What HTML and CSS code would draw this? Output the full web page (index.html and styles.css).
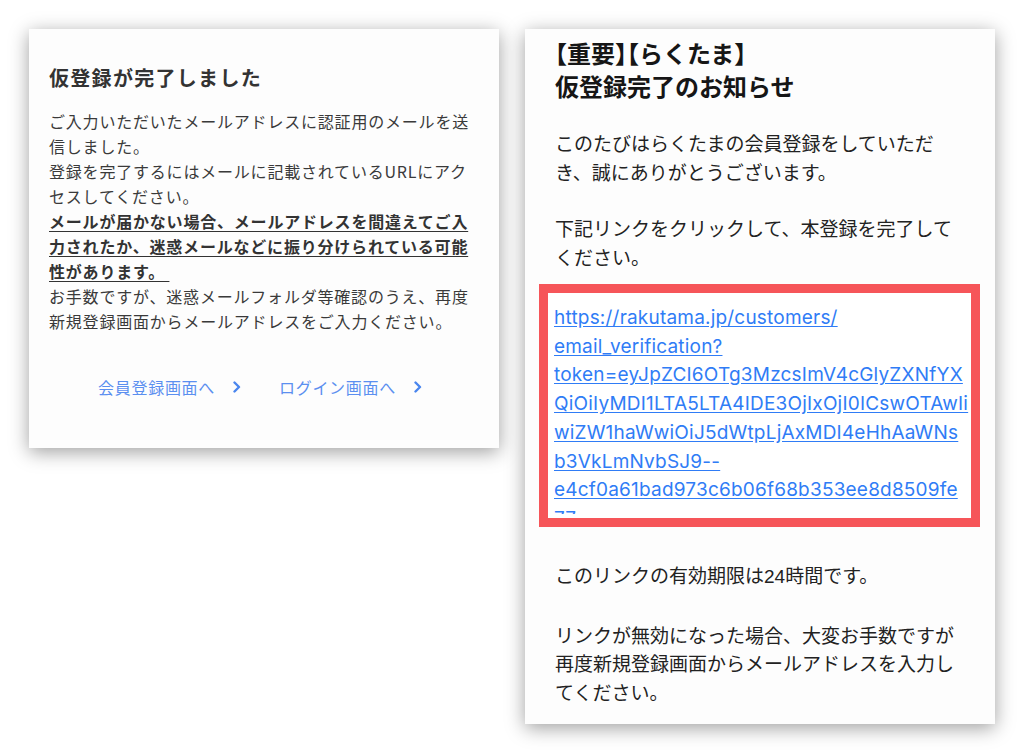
FILE: index.html
```html
<!DOCTYPE html>
<html lang="ja">
<head>
  <meta charset="UTF-8">
  <title>仮登録完了</title>
  <link rel="stylesheet" href="styles.css">
</head>
<body>
  <div class="board">
    <!-- 画面側 -->
    <div class="card card-screen">
      <h1 class="screen-title">仮登録が完了しました</h1>
      <p class="screen-text">
        ご入力いただいたメールアドレスに認証用のメールを送信しました。<br>
        登録を完了するにはメールに記載されているURLにアクセスしてください。<br>
        <span class="notice">メールが届かない場合、メールアドレスを間違えてご入力されたか、迷惑メールなどに振り分けられている可能性があります。&nbsp;</span><br>
        お手数ですが、迷惑メールフォルダ等確認のうえ、再度新規登録画面からメールアドレスをご入力ください。
      </p>
      <div class="screen-links">
        <a class="screen-link" href="#">会員登録画面へ
          <svg class="chevron" viewBox="0 0 8 12" width="8" height="12"><polyline points="1.5,1.5 6,6 1.5,10.5"/></svg>
        </a>
        <a class="screen-link" href="#">ログイン画面へ
          <svg class="chevron" viewBox="0 0 8 12" width="8" height="12"><polyline points="1.5,1.5 6,6 1.5,10.5"/></svg>
        </a>
      </div>
    </div>

    <!-- メール側 -->
    <div class="card card-mail">
      <h2 class="mail-title">【重要】【らくたま】<br>仮登録完了のお知らせ</h2>
      <p class="mail-text">このたびはらくたまの会員登録をしていただき、誠にありがとうございます。</p>
      <p class="mail-text">下記リンクをクリックして、本登録を完了してください。</p>
      <div class="link-box">
        <div class="link-clip">
          <a class="mail-link" href="#">https://rakutama.jp/customers/<br>email_verification?<br>token=eyJpZCI6OTg3MzcsImV4cGlyZXNfYX<br>QiOiIyMDI1LTA5LTA4IDE3OjIxOjI0ICswOTAwIi<br>wiZW1haWwiOiJ5dWtpLjAxMDI4eHhAaWNs<br>b3VkLmNvbSJ9--<br>e4cf0a61bad973c6b06f68b353ee8d8509fe<br>77</a>
        </div>
      </div>
      <p class="mail-text mail-after">このリンクの有効期限は24時間です。</p>
      <p class="mail-text">リンクが無効になった場合、大変お手数ですが再度新規登録画面からメールアドレスを入力してください。</p>
    </div>
  </div>
</body>
</html>
```

FILE: styles.css
```css
body {
  margin: 0;
  background: #ffffff;
  font-family: "Noto Sans CJK JP", sans-serif;
}
.board {
  display: flex;
  align-items: flex-start;
  gap: 26px;
  padding: 29px;
}
.card {
  width: 470px;
  box-sizing: border-box;
  background: #fdfdfd;
  box-shadow: 0 4px 18px rgba(0, 0, 0, 0.38);
  flex-shrink: 0;
}

/* 画面側 */
.card-screen {
  padding: 34px 0 49px 20px;
  color: #3a3a3a;
}
.screen-title {
  margin: 0 0 16px;
  font-size: 20px;
  line-height: 30px;
  letter-spacing: 1.3px;
  font-weight: 700;
  color: #333333;
}
.screen-text {
  width: 428px;
  margin: 0;
  font-size: 16px;
  line-height: 25px;
  letter-spacing: 0.8px;
}
.notice {
  font-weight: 700;
  color: #333333;
  text-decoration: underline;
  text-underline-offset: 3px;
}
.screen-links {
  display: flex;
  justify-content: center;
  gap: 38px;
  margin: 41px 28px 0 0;
}
.screen-link {
  display: flex;
  align-items: center;
  gap: 18px;
  color: #5b8ff0;
  text-decoration: none;
  font-size: 16px;
  line-height: 24px;
  letter-spacing: 0.7px;
}
.chevron {
  fill: none;
  stroke: #4a86ee;
  stroke-width: 2.4;
  stroke-linecap: round;
  stroke-linejoin: round;
}

/* メール側 */
.card-mail {
  padding: 7px 0 16px 30px;
  color: #222222;
  font-family: "Liberation Sans", "Noto Sans CJK JP", sans-serif;
}
.mail-title {
  margin: 0 0 29px;
  font-family: "Noto Sans CJK JP", sans-serif;
  font-size: 24px;
  line-height: 33px;
  font-weight: 700;
  color: #161616;
  font-feature-settings: "halt";
}
.mail-text {
  width: 405px;
  margin: 0 0 28px;
  font-size: 19px;
  line-height: 28.5px;
}
.mail-text:last-child {
  margin-bottom: 0;
}
.link-box {
  width: 441px;
  box-sizing: border-box;
  margin: -17px 0 0 -16px;
  border: 9px solid #f65559;
  background: #ffffff;
  padding: 11px 0 4px 6px;
}
.link-clip {
  height: 210px;
  overflow: hidden;
}
.mail-link {
  color: #2f7cf6;
  font-family: Inter, "Liberation Sans", sans-serif;
  font-size: 19px;
  line-height: 28.7px;
  letter-spacing: 0.2px;
  text-decoration: underline;
  text-underline-offset: 2px;
}
.mail-after {
  margin-top: 36px;
  margin-bottom: 31px;
}
```
